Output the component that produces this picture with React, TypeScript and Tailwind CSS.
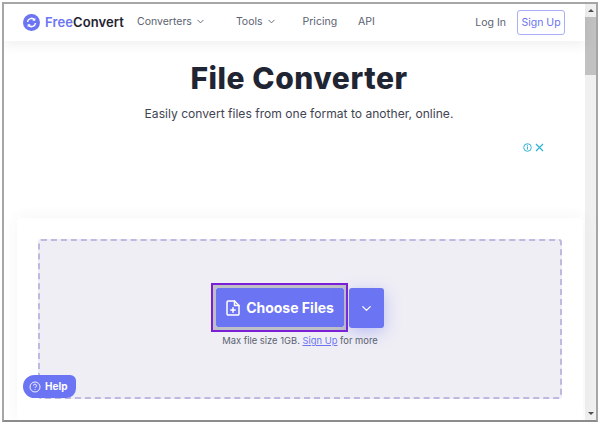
import { ChevronDown } from 'lucide-react'

const font = { fontFamily: 'Inter, "Noto Sans", sans-serif' }

function Logo() {
  return (
    <svg width="17" height="17" viewBox="0 0 17 17" className="shrink-0">
      <circle cx="8.5" cy="8.5" r="8.5" fill="#6b74f2" />
      <path d="M4.5 8a4 4 0 0 1 7-2.2M12.5 9a4 4 0 0 1-7 2.2" fill="none" stroke="#fff" strokeWidth="1.5" />
      <path d="M12.3 3.8v3h-3zM4.7 13.2v-3h3z" fill="#fff" />
    </svg>
  )
}

function FilePlus() {
  return (
    <svg width="14" height="16" viewBox="0 0 14 16" fill="none" stroke="#fff" strokeWidth="1.5" strokeLinejoin="round" strokeLinecap="round">
      <path d="M1 2.2A1.2 1.2 0 0 1 2.2 1h6.3L13 5.5v8.3a1.2 1.2 0 0 1-1.2 1.2H2.2A1.2 1.2 0 0 1 1 13.800z" />
      <path d="M8.500 1v4.500H13M7 7.800v4.400M4.800 10h4.400" />
    </svg>
  )
}

function Scrollbar() {
  return (
    <div className="w-[11px] shrink-0 bg-[#f0f0f0] flex flex-col items-center">
      <div className="h-[13px] flex items-center justify-center">
        <div className="w-0 h-0 border-x-[3px] border-x-transparent border-b-[3px] border-b-[#505050]" />
      </div>
      <div className="w-full h-[58px] bg-[#c1c1c1]" />
      <div className="flex-1" />
      <div className="h-[13px] flex items-center justify-center">
        <div className="w-0 h-0 border-x-[3px] border-x-transparent border-t-[3px] border-t-[#505050]" />
      </div>
    </div>
  )
}

export default function App() {
  return (
    <div className="w-[600px] h-[425px] bg-white pl-[2px] pt-[2px] pr-[2px] pb-[3px]" style={font}>
      <div className="h-full border-2 border-[#a6a6a6] border-b-[#8c8c8c] flex overflow-hidden">
        <div className="flex-1 min-w-0 flex flex-col relative">
          <header className="h-[37px] shrink-0 flex items-center pl-[19px] pr-[18px] bg-white shadow-[0_4px_12px_rgba(40,40,60,0.07)] text-[#5b6270] text-[10.5px]">
            <Logo />
            <span className="ml-[5px] text-[13px] font-semibold tracking-[0.1px] text-[#6b74f2]">Free<span className="text-[#1f2430]">Convert</span></span>
            <span className="ml-[13px] -mt-[2px] flex items-center gap-[3px]">Converters <ChevronDown size={11} strokeWidth={2} /></span>
            <span className="ml-[30px] -mt-[2px] flex items-center gap-[3px]">Tools <ChevronDown size={11} strokeWidth={2} /></span>
            <span className="ml-[26px] -mt-[2px]">Pricing</span>
            <span className="ml-[21px] -mt-[2px]">API</span>
            <span className="ml-auto text-[10.5px]">Log In</span>
            <span className="ml-[11px] mr-[2px] h-[25px] w-[48px] flex items-center justify-center rounded-[3px] border border-[#a9aef8] text-[#6b74f2] text-[10.5px]">Sign Up</span>
          </header>
          <main className="flex-1 min-h-0 flex flex-col items-center pl-[9px]">
            <h1 className="mt-[19px] text-[30px] leading-[36px] font-extrabold tracking-[0.55px] text-[#1f2533]">File Converter</h1>
            <p className="mt-[10px] text-[12.1px] leading-[16px] text-[#3f4552]">Easily convert files from one format to another, online.</p>
            <div className="mt-[19px] h-[12px] w-full flex justify-end items-center gap-[3px] pr-[41px] text-[#2fb4d6]">
              <svg width="9" height="9" viewBox="0 0 9 9" fill="none" stroke="currentColor"><circle cx="4.500" cy="4.500" r="3.800" /><path d="M4.500 3.500v3M4.500 1.800v1" /></svg>
              <svg width="9" height="9" viewBox="0 0 9 9" fill="none" stroke="currentColor" strokeWidth="1.200"><path d="M1 1l7 7M8 1l-7 7" /></svg>
            </div>
            <section className="mt-[65px] w-[566px] flex-1 self-start ml-[4px] bg-white rounded-t-[4px] shadow-[0_0_16px_rgba(60,60,110,0.06)] px-[21px] pt-[21px] pb-[20px]">
              <div className="h-[160px] rounded-[3px] border-2 border-dashed border-[#bdb9e0] bg-[#efeef5] flex flex-col items-center pt-[44px]">
                <div className="flex items-start gap-[3px] -ml-[3px]">
                  <div className="outline-2 outline-[#7b1fd6] border-[3px] border-r-2 border-[#bfbfc6]">
                    <button className="h-[39px] w-[128px] bg-[#6b74f2] rounded-[2px] text-white flex items-center justify-center gap-[6px] text-[14px] font-bold">
                      <FilePlus /> Choose Files
                    </button>
                  </div>
                  <button className="mt-[3px] h-[40px] w-[35px] rounded-[3px] bg-[#6b74f2] text-white flex items-center justify-center shadow-[0_4px_16px_rgba(107,116,242,0.4)]">
                    <ChevronDown size={15} strokeWidth={2} />
                  </button>
                </div>
                <p className="mt-[4px] text-[9.4px] leading-[13px] text-[#5b6270]">Max file size 1GB. <span className="text-[#6b74f2] underline">Sign Up</span> for more</p>
              </div>
            </section>
          </main>
          <div className="absolute left-[19px] bottom-[22px] h-[23px] w-[53px] bg-[#6b74f2] rounded-l-[12px] rounded-r-[6px] rounded-br-[10px] flex items-center pl-[6px] gap-[4px] text-white text-[10px] font-bold">
            <svg width="12" height="12" viewBox="0 0 12 12" fill="none" stroke="#fff" strokeWidth="0.900"><circle cx="6" cy="6" r="5" /><path d="M4.500 4.700a1.500 1.500 0 1 1 2.200 1.300c-.5.300-.7.500-.7 1M6 8.200v.8" /></svg>
            Help
          </div>
        </div>
        <Scrollbar />
      </div>
    </div>
  )
}
